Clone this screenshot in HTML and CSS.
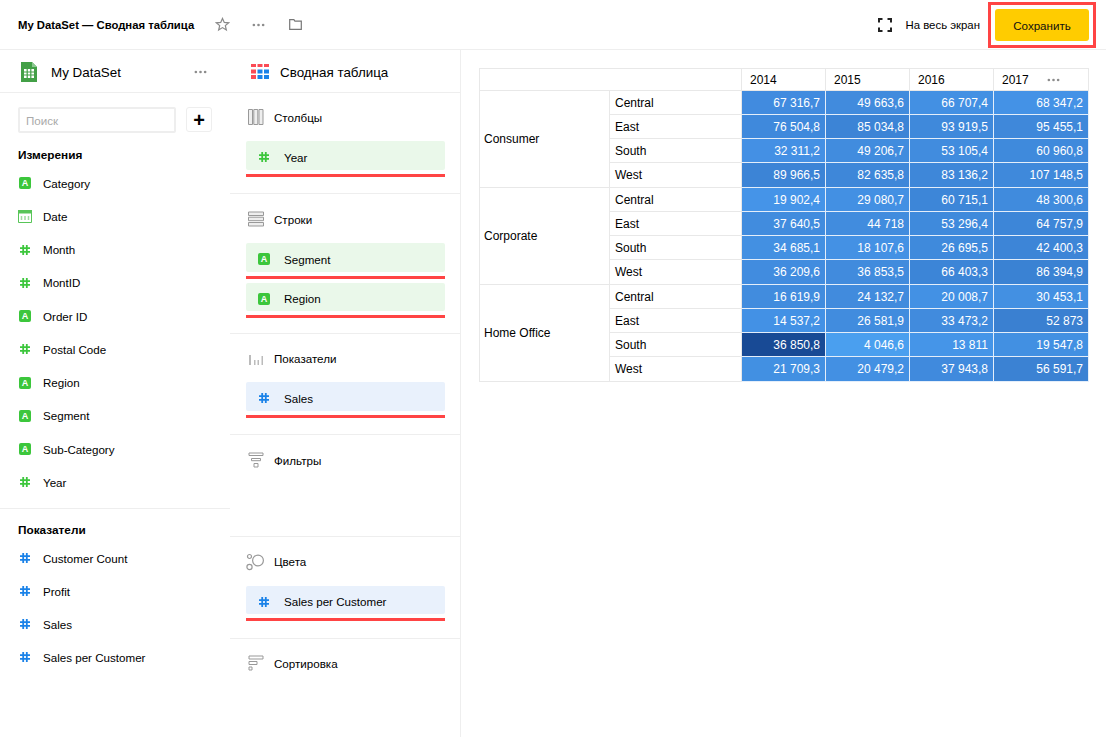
FILE: index.html
```html
<!DOCTYPE html>
<html lang="ru">
<head>
  <meta charset="UTF-8">
  <title>My DataSet — Сводная таблица</title>
  <meta name="viewport" content="width=device-width, initial-scale=1">
  <link rel="stylesheet" href="styles.css">
</head>
<body>
  <svg class="sprite" aria-hidden="true">
    <symbol id="i-hash" viewBox="0 0 12 12"><path d="M4.200 1v10M7.800 1v10M1 4.200h10M1 7.800h10" fill="none" stroke="currentColor" stroke-width="1.800"/></symbol>
    <symbol id="i-dots" viewBox="0 0 14 4"><circle cx="2" cy="2" r="1.400"/><circle cx="7" cy="2" r="1.400"/><circle cx="12" cy="2" r="1.400"/></symbol>
    <symbol id="i-columns" viewBox="0 0 16 16"><path d="M.5 .5h4v15h-4zM5.800 .5h4v15h-4zM11 .5h4v15h-4z" fill="#eee" stroke="#999"/></symbol>
    <symbol id="i-rows" viewBox="0 0 16 16"><path d="M.5 1h15v3.500H.5zM.5 6.200h15v3.500H.5zM.5 11.500h15V15H.5z" fill="#eee" stroke="#999"/></symbol>
    <symbol id="i-measures" viewBox="0 0 16 16"><path d="M1 5h2v10H1zM6 10h1.500v5H6zM9.500 10H11v5H9.500zM13.500 6H15v9h-1.500z" fill="#bbb"/></symbol>
    <symbol id="i-filter" viewBox="0 0 16 16"><path d="M1 1h14v2.500H1zM3.500 6.500h9v2.200h-9zM6 11.500h4V15H6z" fill="none" stroke="#999"/></symbol>
    <symbol id="i-colors" viewBox="0 0 18 18"><g fill="none" stroke="#999" stroke-width="1.200"><circle cx="3.500" cy="3.500" r="2"/><circle cx="3.500" cy="14" r="2.600"/><circle cx="12" cy="7.500" r="5.400"/></g></symbol>
    <symbol id="i-sort" viewBox="0 0 16 16"><path d="M1 1h14v3H1zM1 6.500h8v3H1zM1 12h3v3H1z" fill="none" stroke="#999"/></symbol>
  </svg>

  <header class="topbar">
    <span class="title">My DataSet — Сводная таблица</span>
    <svg class="icon-star" viewBox="0 0 16 16"><path d="M8 1.500l1.900 4.300 4.600.4-3.500 3 1.100 4.600L8 11.300l-4.100 2.500L5 9.200l-3.500-3 4.600-.4z" fill="none" stroke="#8a8a8a" stroke-width="1.300"/></svg>
    <svg class="icon-dots top-dots"><use href="#i-dots"/></svg>
    <svg class="icon-folder" viewBox="0 0 13 11"><path d="M.7 .7h4.200l1 1.400h6.400v8.200H.7z" fill="none" stroke="#777" stroke-width="1.200"/></svg>
    <div class="topbar-right">
      <svg class="icon-full" viewBox="0 0 14 14"><path d="M1 4.500V1h3.500M9.500 1H13v3.500M13 9.500V13H9.500M4.500 13H1V9.500" fill="none" stroke="#222" stroke-width="2"/></svg>
      <span class="full-label">На весь экран</span>
      <div class="highlight"><button class="save" type="button">Сохранить</button></div>
    </div>
  </header>

  <div class="workspace">
    <aside class="fields">
      <div class="pane-head">
        <svg class="icon-sheet" viewBox="0 0 16 20"><path d="M0 0h11l5 5v15H0z" fill="#43a047"/><path d="M11 0l5 5h-5z" fill="#8bc890"/><path d="M3 7h10v9H3z" fill="#fff"/><path d="M6.200 7v9M9.800 7v9M3 10h10M3 13h10" stroke="#43a047" stroke-width="1.200"/></svg>
        <span class="pane-title">My DataSet</span>
        <svg class="icon-dots head-dots"><use href="#i-dots"/></svg>
      </div>
      <div class="search-row">
        <input class="search" placeholder="Поиск">
        <button class="add" type="button">+</button>
      </div>
      <section class="group group-dims">
        <h3>Измерения</h3>
        <ul>
          <li><span class="badge-a">A</span>Category</li>
          <li><svg class="icon-date" viewBox="0 0 14 13"><path d="M.5 .5h13v12H.5z" fill="#fff" stroke="#58c558"/><path d="M0 0h14v3.500H0z" fill="#58c558"/><path d="M3.500 6v4M7 6v4M10.500 6v4" stroke="#9fdc9f" stroke-width="1.500"/></svg>Date</li>
          <li><svg class="hash hash-green"><use href="#i-hash"/></svg>Month</li>
          <li><svg class="hash hash-green"><use href="#i-hash"/></svg>MontID</li>
          <li><span class="badge-a">A</span>Order ID</li>
          <li><svg class="hash hash-green"><use href="#i-hash"/></svg>Postal Code</li>
          <li><span class="badge-a">A</span>Region</li>
          <li><span class="badge-a">A</span>Segment</li>
          <li><span class="badge-a">A</span>Sub-Category</li>
          <li><svg class="hash hash-green"><use href="#i-hash"/></svg>Year</li>
        </ul>
      </section>
      <section class="group group-measures">
        <h3>Показатели</h3>
        <ul>
          <li><svg class="hash hash-blue"><use href="#i-hash"/></svg>Customer Count</li>
          <li><svg class="hash hash-blue"><use href="#i-hash"/></svg>Profit</li>
          <li><svg class="hash hash-blue"><use href="#i-hash"/></svg>Sales</li>
          <li><svg class="hash hash-blue"><use href="#i-hash"/></svg>Sales per Customer</li>
        </ul>
      </section>
    </aside>

    <div class="shelves">
      <div class="pane-head pane-head-shelves">
        <svg class="icon-pivot" viewBox="0 0 18 15"><path d="M0 0h5v3H0zM6.500 0h5v3h-5zM13 0h5v3h-5zM0 5.500h5v4H0zM0 11h5v4H0z" fill="#fb4b55"/><path d="M6.500 5.500h5v4h-5zM13 5.500h5v4h-5zM6.500 11h5v4h-5zM13 11h5v4h-5z" fill="#1a82e8"/></svg>
        <span class="pane-title">Сводная таблица</span>
      </div>
      <section class="shelf shelf-columns">
        <div class="shelf-label"><svg class="shelf-icon"><use href="#i-columns"/></svg>Столбцы</div>
        <div class="slot"><div class="chip chip-green"><svg class="hash hash-green"><use href="#i-hash"/></svg>Year</div></div>
      </section>
      <section class="shelf shelf-rows">
        <div class="shelf-label"><svg class="shelf-icon"><use href="#i-rows"/></svg>Строки</div>
        <div class="slot"><div class="chip chip-green"><span class="badge-a">A</span>Segment</div></div>
        <div class="slot"><div class="chip chip-green chip-slim"><span class="badge-a">A</span>Region</div></div>
      </section>
      <section class="shelf shelf-measures">
        <div class="shelf-label"><svg class="shelf-icon"><use href="#i-measures"/></svg>Показатели</div>
        <div class="slot"><div class="chip chip-blue"><svg class="hash hash-blue"><use href="#i-hash"/></svg>Sales</div></div>
      </section>
      <section class="shelf shelf-filters">
        <div class="shelf-label"><svg class="shelf-icon"><use href="#i-filter"/></svg>Фильтры</div>
      </section>
      <section class="shelf shelf-colors">
        <div class="shelf-label"><svg class="shelf-icon shelf-icon-wide"><use href="#i-colors"/></svg>Цвета</div>
        <div class="slot"><div class="chip chip-blue chip-slim"><svg class="hash hash-blue"><use href="#i-hash"/></svg>Sales per Customer</div></div>
      </section>
      <section class="shelf shelf-sort">
        <div class="shelf-label"><svg class="shelf-icon"><use href="#i-sort"/></svg>Сортировка</div>
      </section>
    </div>

    <main class="chart">
      <table class="pivot">
        <colgroup>
          <col class="col-segment"><col class="col-region"><col class="col-year"><col class="col-year"><col class="col-year"><col class="col-last">
        </colgroup>
        <thead>
          <tr>
            <th colspan="2"></th>
            <th>2014</th>
            <th>2015</th>
            <th>2016</th>
            <th><span class="th-last">2017<svg class="icon-dots table-dots"><use href="#i-dots"/></svg></span></th>
          </tr>
        </thead>
        <tbody>
          <tr>
            <td class="segment" rowspan="4">Consumer</td><td>Central</td>
            <td class="heat" style="background:#418bdf">67 316,7</td><td class="heat" style="background:#418bdd">49 663,6</td><td class="heat" style="background:#4390e3">66 707,4</td><td class="heat" style="background:#4492e6">68 347,2</td>
          </tr>
          <tr>
            <td>East</td>
            <td class="heat" style="background:#3f89dc">76 504,8</td><td class="heat" style="background:#3c84d6">85 034,8</td><td class="heat" style="background:#3f89db">93 919,5</td><td class="heat" style="background:#3f88da">95 455,1</td>
          </tr>
          <tr>
            <td>South</td>
            <td class="heat" style="background:#4490e4">32 311,2</td><td class="heat" style="background:#418cde">49 206,7</td><td class="heat" style="background:#418cde">53 105,4</td><td class="heat" style="background:#3f8adc">60 960,8</td>
          </tr>
          <tr class="group-end">
            <td>West</td>
            <td class="heat" style="background:#3c84d6">89 966,5</td><td class="heat" style="background:#3e87d9">82 635,8</td><td class="heat" style="background:#3e87d9">83 136,2</td><td class="heat" style="background:#3f89db">107 148,5</td>
          </tr>
          <tr>
            <td class="segment" rowspan="4">Corporate</td><td>Central</td>
            <td class="heat" style="background:#4594e8">19 902,4</td><td class="heat" style="background:#4390e3">29 080,7</td><td class="heat" style="background:#3d86d8">60 715,1</td><td class="heat" style="background:#408bdd">48 300,6</td>
          </tr>
          <tr>
            <td>East</td>
            <td class="heat" style="background:#418cde">37 640,5</td><td class="heat" style="background:#418cde">44 718</td><td class="heat" style="background:#3f8adc">53 296,4</td><td class="heat" style="background:#3d86d8">64 757,9</td>
          </tr>
          <tr>
            <td>South</td>
            <td class="heat" style="background:#4390e2">34 685,1</td><td class="heat" style="background:#4491e4">18 107,6</td><td class="heat" style="background:#3f8adc">26 695,5</td><td class="heat" style="background:#3d85d7">42 400,3</td>
          </tr>
          <tr class="group-end">
            <td>West</td>
            <td class="heat" style="background:#418cdf">36 209,6</td><td class="heat" style="background:#418bdd">36 853,5</td><td class="heat" style="background:#3c85d7">66 403,3</td><td class="heat" style="background:#3a82d3">86 394,9</td>
          </tr>
          <tr>
            <td class="segment" rowspan="4">Home Office</td><td>Central</td>
            <td class="heat" style="background:#418cde">16 619,9</td><td class="heat" style="background:#418bdd">24 132,7</td><td class="heat" style="background:#4391e4">20 008,7</td><td class="heat" style="background:#4390e2">30 453,1</td>
          </tr>
          <tr>
            <td>East</td>
            <td class="heat" style="background:#4391e5">14 537,2</td><td class="heat" style="background:#418cde">26 581,9</td><td class="heat" style="background:#418bdd">33 473,2</td><td class="heat" style="background:#3a80d1">52 873</td>
          </tr>
          <tr>
            <td>South</td>
            <td class="heat" style="background:#184a95">36 850,8</td><td class="heat" style="background:#4a9fef">4 046,6</td><td class="heat" style="background:#4595e8">13 811</td><td class="heat" style="background:#4290e2">19 547,8</td>
          </tr>
          <tr class="group-end">
            <td>West</td>
            <td class="heat" style="background:#4290e2">21 709,3</td><td class="heat" style="background:#4390e3">20 479,2</td><td class="heat" style="background:#408add">37 943,8</td><td class="heat" style="background:#3b82d3">56 591,7</td>
          </tr>
        </tbody>
      </table>
    </main>
  </div>
</body>
</html>
```

FILE: styles.css
```css
* {
  box-sizing: border-box;
}
body {
  margin: 0;
  font-family: "Liberation Sans", Arial, sans-serif;
  font-size: 11.6px;
  color: #000;
  background: #fff;
  height: 737px;
  overflow: hidden;
}
.sprite {
  display: none;
}

/* top bar */
.topbar {
  display: flex;
  align-items: center;
  height: 50px;
  padding: 0 10px 0 18px;
  border-bottom: 1px solid #eee;
}
.title {
  font-size: 11.3px;
  font-weight: bold;
}
.icon-star {
  width: 15px;
  height: 15px;
  margin-left: 21px;
}
.icon-dots {
  width: 13px;
  height: 4px;
  fill: #8c8c8c;
}
.top-dots {
  margin-left: 22px;
}
.icon-folder {
  width: 13px;
  height: 11px;
  margin-left: 24px;
}
.topbar-right {
  display: flex;
  align-items: center;
  margin-left: auto;
}
.icon-full {
  width: 14px;
  height: 14px;
}
.full-label {
  margin-left: 13px;
  font-size: 11.4px;
}
.highlight {
  margin: 2px 0 1px 8px;
  padding: 4px;
  border: 3px solid #f44;
}
.save {
  display: block;
  width: 94px;
  height: 32px;
  border: none;
  border-radius: 3px;
  background: #fc0;
  color: #111;
  font: inherit;
}

/* panes */
.workspace {
  display: flex;
  height: 687px;
}
.fields {
  width: 230px;
}
.shelves {
  width: 231px;
  border-right: 1px solid #eee;
}
.chart {
  flex: 1;
  padding: 18px 0 0 18px;
}
.pane-head {
  display: flex;
  align-items: center;
  height: 43px;
  padding: 2px 23px 0 21px;
  border-bottom: 1px solid #eee;
}
.pane-title {
  font-size: 13.4px;
}
.icon-sheet {
  width: 16px;
  height: 20px;
  margin-right: 14px;
}
.head-dots {
  margin-left: auto;
}
.icon-pivot {
  width: 18px;
  height: 15px;
  margin: -2px 11px 0 0;
}

/* field list */
.search-row {
  display: flex;
  margin: 14px 18px 0;
  gap: 10px;
}
.search {
  width: 158px;
  height: 26px;
  padding: 0 6px;
  border: 2px solid #eee;
  border-radius: 2px;
  font: inherit;
}
.search::placeholder {
  color: #aaa;
}
.add {
  width: 26px;
  height: 25px;
  padding: 0;
  border: 1px solid #eee;
  border-radius: 3px;
  background: #fff;
  font: bold 20px/22px "Liberation Sans", Arial, sans-serif;
  color: #000;
}
.group {
  padding: 0 18px;
}
.group h3 {
  margin: 0;
  height: 20px;
  font-size: 11.8px;
  line-height: 20px;
}
.group ul {
  margin: 0;
  padding: 0;
  list-style: none;
}
.group li {
  display: flex;
  align-items: center;
  height: 33.25px;
  padding-left: 25px;
  position: relative;
}
.group li > svg,
.group li > .badge-a {
  position: absolute;
  left: 1px;
}
.group li > .icon-date {
  left: 0;
}
.group-dims {
  padding-top: 12px;
  padding-bottom: 9px;
  border-bottom: 1px solid #eee;
}
.group-dims ul {
  margin-top: 1.4px;
}
.group-measures {
  padding-top: 11px;
}
.group-measures ul {
  margin-top: 2px;
}
.group-measures li {
  height: 33px;
}
.badge-a {
  display: flex;
  align-items: center;
  justify-content: center;
  width: 12px;
  height: 12px;
  border-radius: 2px;
  background: #3cc63c;
  color: #fff;
  font-size: 9px;
  font-weight: bold;
}
.hash {
  width: 12px;
  height: 12px;
}
.hash-green {
  color: #3cc63c;
}
.hash-blue {
  color: #1a82e8;
}
.icon-date {
  width: 14px;
  height: 13px;
}

/* shelves */
.shelf {
  padding: 13px 15px 0 16px;
  border-bottom: 1px solid #eee;
}
.shelf-columns { height: 101px; padding-top: 12px; }
.shelf-rows { height: 140px; }
.shelf-measures { height: 101px; padding-top: 12px; }
.shelf-filters { height: 102px; }
.shelf-colors { height: 102px; padding-top: 12px; }
.shelf-sort { border-bottom: none; padding-top: 12px; }
.shelf-label {
  display: flex;
  align-items: center;
  height: 24px;
  margin-bottom: 12px;
}
.shelf-colors .shelf-label {
  margin-bottom: 13px;
}
.shelf-icon {
  width: 16px;
  height: 16px;
  margin: 0 10px 0 2px;
}
.shelf-icon-wide {
  width: 18px;
  height: 18px;
  margin: 2px 10px 0 0;
}
.slot {
  margin-bottom: 4px;
}
.slot::after {
  content: "";
  display: block;
  height: 3px;
  margin-top: 4px;
  background: #f44;
}
.chip {
  display: flex;
  align-items: center;
  height: 29px;
  padding: 3px 0 0 12px;
  border-radius: 2px;
}
.chip-slim {
  height: 28px;
}
.chip-green {
  background: #eaf8ea;
}
.chip-blue {
  background: #e9f1fc;
}
.chip .hash,
.chip .badge-a {
  margin: 0 14px 0 0;
}

/* pivot table */
.pivot {
  table-layout: fixed;
  width: 609px;
  border-collapse: collapse;
  font-size: 12px;
}
.col-segment { width: 130px; }
.col-region { width: 132px; }
.col-year { width: 84px; }
.col-last { width: 95px; }
.pivot th,
.pivot td {
  height: 24px;
  padding: 0 5px;
  border: 1px solid #e8e8e8;
  font-weight: normal;
  text-align: left;
  white-space: nowrap;
}
.pivot th {
  height: 22px;
  padding-left: 8px;
}
.pivot .group-end td {
  height: 25px;
}
.pivot .segment {
  height: auto;
  padding-left: 4px;
}
.pivot td.heat {
  border-color: #e4eefa;
  text-align: right;
  color: #fff;
}
.th-last {
  display: flex;
  align-items: center;
}
.table-dots {
  margin-left: 18px;
}
```
